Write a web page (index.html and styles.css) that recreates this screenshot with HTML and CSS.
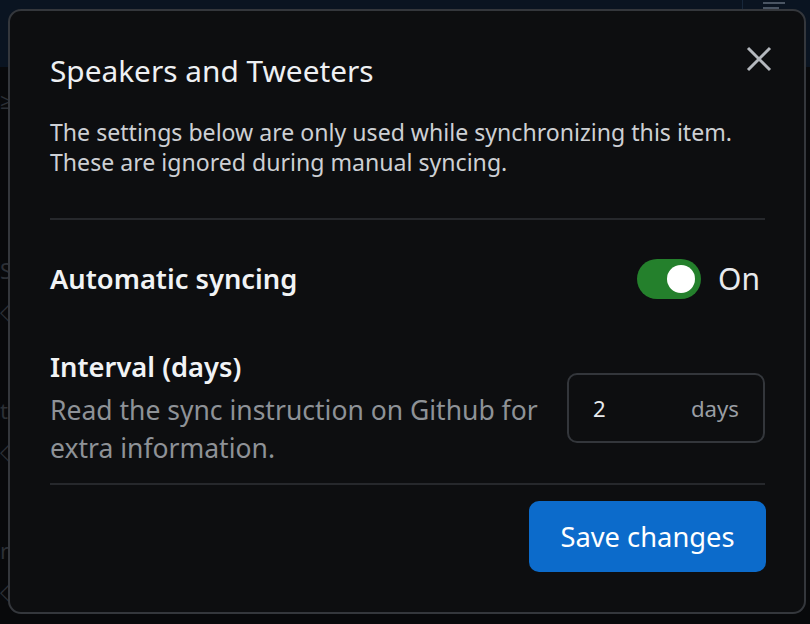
FILE: index.html
```html
<!DOCTYPE html>
<html lang="en">
<head>
<meta charset="utf-8">
<title>Speakers and Tweeters</title>
<link rel="stylesheet" href="styles.css">
</head>
<body>
<div class="page">
  <header class="topbar">
    <div class="topbar-main"></div>
    <div class="topbar-side">
      <span class="topbar-icon">
        <span class="bar bar-long"></span>
        <span class="bar bar-short"></span>
      </span>
    </div>
  </header>
  <main class="page-body">
    <ul class="bg-list">
      <li class="bg-item">≥</li>
      <li class="bg-item">S</li>
      <li class="bg-item">◇</li>
      <li class="bg-item">t</li>
      <li class="bg-item">◇</li>
      <li class="bg-item">r</li>
      <li class="bg-item">◇</li>
    </ul>
  </main>
</div>

<div class="backdrop">
  <section class="dialog" role="dialog" aria-labelledby="dlg-title">
    <div class="dialog-head">
      <h2 class="dialog-title" id="dlg-title">Speakers and Tweeters</h2>
      <button class="close" aria-label="Close">
        <svg viewBox="0 0 26 26" width="26" height="26">
          <path d="M2 2 L24 24 M24 2 L2 24" stroke="#b4b8be" stroke-width="3" fill="none"/>
        </svg>
      </button>
    </div>
    <p class="dialog-desc">The settings below are only used while synchronizing this item.<br>These are ignored during manual syncing.</p>
    <div class="divider"></div>
    <div class="setting setting-toggle">
      <span class="setting-label">Automatic syncing</span>
      <div class="toggle-wrap">
        <span class="toggle"><span class="knob"></span></span>
        <span class="toggle-state">On</span>
      </div>
    </div>
    <div class="setting setting-interval">
      <div class="setting-text">
        <div class="setting-label">Interval (days)</div>
        <div class="setting-help">Read the sync instruction on Github for extra information.</div>
      </div>
      <label class="days-input">
        <span class="days-value">2</span>
        <span class="days-unit">days</span>
      </label>
    </div>
    <div class="divider divider-bottom"></div>
    <div class="dialog-foot">
      <button class="save">Save changes</button>
    </div>
  </section>
</div>
</body>
</html>
```

FILE: styles.css
```css
* { box-sizing: border-box; }

html, body {
  margin: 0;
  padding: 0;
  height: 100%;
}

body {
  background: #090a0c;
  font-family: "Noto Sans", "Open Sans", sans-serif;
  color: #eef0f3;
  overflow: hidden;
}

/* ---------- page behind the dialog ---------- */
.page {
  height: 100%;
  display: flex;
  flex-direction: column;
}

.topbar {
  height: 67px;
  display: flex;
  background: #0a1421;
}

.topbar-main {
  flex: 1;
}

.topbar-side {
  width: 68px;
  border-left: 1px solid #17273a;
  display: flex;
  padding: 2px 0 0 20px;
}

.topbar-icon {
  display: flex;
  flex-direction: column;
  gap: 3px;
}

.topbar-icon .bar {
  display: block;
  height: 2px;
  background: #4a5563;
}

.bar-long { width: 22px; }
.bar-short { width: 16px; }

.page-body {
  flex: 1;
  background: #08090b;
}

.bg-list {
  list-style: none;
  margin: 0;
  padding: 20px 0 0 0;
  display: flex;
  flex-direction: column;
  gap: 14px;
  color: #2c3036;
  font-size: 22px;
  line-height: 26px;
}

.bg-item:nth-child(2) { margin-top: 130px; }
.bg-item:nth-child(4) { margin-top: 60px; }
.bg-item:nth-child(6) { margin-top: 60px; }

/* ---------- dialog ---------- */
.backdrop {
  position: fixed;
  inset: 0;
  display: flex;
  padding: 9px 4px 10px 8px;
}

.dialog {
  flex: 1;
  background: #0d0e10;
  border: 2px solid #34373c;
  border-radius: 13px;
  padding: 42px 39px 39px 40px;
  display: flex;
  flex-direction: column;
}

.dialog-head {
  display: flex;
  justify-content: space-between;
  align-items: flex-start;
}

.dialog-title {
  margin: 0;
  font-size: 29.8px;
  line-height: 36px;
  font-weight: 400;
  color: #eef0f3;
}

.close {
  margin: -7px -7px 0 0;
  padding: 0;
  border: 0;
  background: none;
  width: 26px;
  height: 26px;
  display: flex;
}

.dialog-desc {
  margin: 28px 0 0 0;
  font-size: 23.1px;
  line-height: 30px;
  font-weight: 400;
  color: #cdd0d4;
}

.divider {
  height: 2px;
  background: #26282c;
  margin-top: 41px;
}

.setting {
  display: flex;
  justify-content: space-between;
  align-items: center;
}

.setting-toggle {
  margin-top: 39px;
}

.setting-label {
  font-size: 27.3px;
  line-height: 36px;
  font-weight: 600;
  color: #f1f3f5;
}

.toggle-wrap {
  display: flex;
  align-items: center;
  gap: 17px;
  margin-right: 5px;
}

.toggle {
  width: 64px;
  height: 40px;
  border-radius: 20px;
  background: #24802c;
  display: flex;
  align-items: center;
  justify-content: flex-end;
  padding-right: 6px;
}

.knob {
  width: 28px;
  height: 28px;
  border-radius: 50%;
  background: #ffffff;
}

.toggle-state {
  font-size: 30px;
  line-height: 36px;
  font-weight: 400;
  color: #e8eaed;
}

.setting-interval {
  margin-top: 50px;
}

.setting-help {
  margin-top: 6px;
  font-size: 26.5px;
  line-height: 38px;
  font-weight: 400;
  color: #8e9297;
  max-width: 500px;
}

.days-input {
  width: 198px;
  height: 70px;
  border: 2px solid #33363b;
  border-radius: 10px;
  display: flex;
  align-items: center;
  justify-content: space-between;
  padding: 0 24px 0 24px;
  font-size: 22.2px;
  font-weight: 400;
}

.days-value { color: #e8eaed; }
.days-unit { color: #9a9ea4; }

.divider-bottom {
  margin-top: 16px;
}

.dialog-foot {
  display: flex;
  justify-content: flex-end;
  margin-top: 16px;
  margin-right: -1px;
}

.save {
  width: 237px;
  height: 71px;
  border: 0;
  border-radius: 10px;
  background: #0c6bcb;
  color: #ffffff;
  font-family: "Noto Sans", "Open Sans", sans-serif;
  font-size: 27.3px;
}
```
